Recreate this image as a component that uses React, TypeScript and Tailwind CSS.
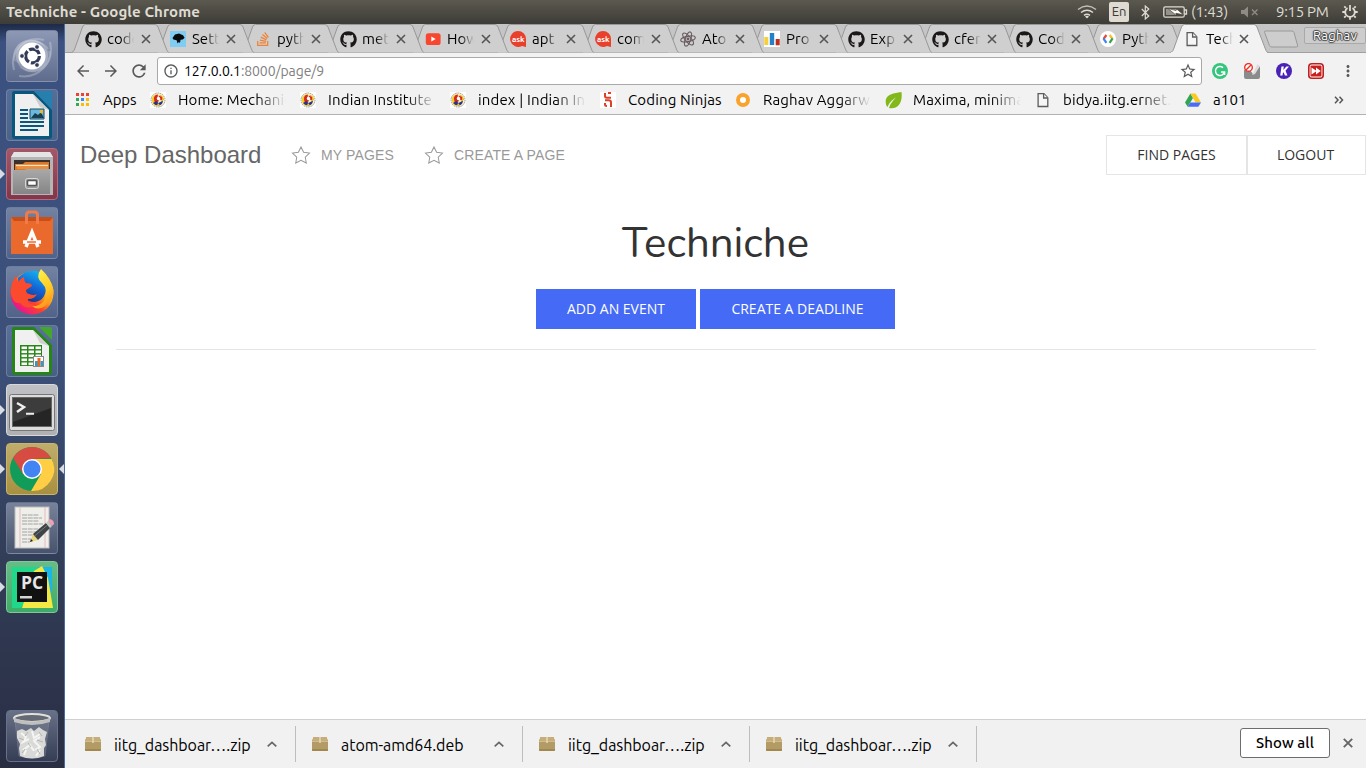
import React from 'react';
import { FaGithub, FaStackOverflow } from 'react-icons/fa';
import { MdArrowBack, MdArrowForward, MdRefresh, MdInfoOutline, MdStarBorder, MdMoreVert } from 'react-icons/md';

const ui = "font-['Ubuntu','Noto_Sans',sans-serif]";

/* ---------- favicons ---------- */

const Github = () => <FaGithub size={17} color="#1b1817" />;

const Settings = () => (
  <svg width="16" height="16" viewBox="0 0 16 16">
    <rect width="16" height="16" fill="#7fcdf3" />
    <path d="M2.5 7 5 3.6l4-1 4 1.6 1.6 2.6-1.8 1.6-2.2.4-.6 3-1.6-.6-.8 1.4-1-3.4-3.2-.6Z" fill="#0a0a0a" />
  </svg>
);

const StackOverflow = () => <FaStackOverflow size={16} color="#ef8236" />;

const Youtube = () => (
  <svg width="16" height="16" viewBox="0 0 16 16">
    <rect x=".8" y="2.2" width="14.8" height="11.8" rx="2.6" fill="#f8462f" />
    <path d="M6.3 5.4v5l4.4-2.5Z" fill="#fff" />
  </svg>
);

const Ask = () => (
  <svg width="17" height="17" viewBox="0 0 17 17">
    <path d="M8 0a8 8 0 1 0 4 15l4 1V8a8 8 0 0 0-8-8Z" fill="#e8402a" />
    <text x="8.2" y="10.8" textAnchor="middle" fontSize="8" fontWeight="700" fill="#fff" fontFamily="Ubuntu, Noto Sans">ask</text>
  </svg>
);

const Atom = () => (
  <svg width="16" height="16" viewBox="0 0 16 16" fill="none" stroke="#685b60" strokeWidth="1.1">
    <ellipse cx="8" cy="8" rx="7.4" ry="2.7" transform="rotate(-12 8 8)" />
    <ellipse cx="8" cy="8" rx="7.4" ry="2.7" transform="rotate(48 8 8)" />
    <ellipse cx="8" cy="8" rx="7.4" ry="2.7" transform="rotate(108 8 8)" />
    <circle cx="8" cy="8" r=".9" fill="#685b60" />
  </svg>
);

const Bars = () => (
  <svg width="16" height="16" viewBox="0 0 16 16">
    <rect width="16" height="16" fill="#fff" />
    <rect x=".3" y="6" width="4" height="8" fill="#f7cf3a" />
    <rect x="5.8" y="2" width="4.4" height="12" fill="#2480c8" />
    <rect x="11.7" y="8" width="4" height="6.3" fill="#bf2f1c" />
  </svg>
);

const Developers = () => (
  <svg width="16" height="16" viewBox="0 0 16 16" fill="none" strokeWidth="2.2">
    <circle cx="8" cy="8" r="8" fill="#fff" />
    <path d="M6.4 4 3.5 8" stroke="#e8453c" />
    <path d="m3.4 7.4 3 4.400" stroke="#4086f4" />
    <path d="m9.600 4 3 4" stroke="#f6c12b" />
    <path d="m12.600 7.400-3 4.400" stroke="#31a350" />
  </svg>
);

const Page = () => (
  <svg width="16" height="16" viewBox="0 0 16 16" fill="#f6f6f6" stroke="#5c5c5c" strokeWidth="1.3">
    <path d="M3.1 1.7h5.8l3.9 4v8.8H3.1Z" />
    <path d="M8.6 1.7V6h4.2" />
  </svg>
);

/* ---------- tab strip ---------- */

const tabs = [
  { icon: <Github />, title: 'code' },
  { icon: <Settings />, title: 'Sett' },
  { icon: <StackOverflow />, title: 'pyth' },
  { icon: <Github />, title: 'met' },
  { icon: <Youtube />, title: 'How' },
  { icon: <Ask />, title: 'apt' },
  { icon: <Ask />, title: 'com' },
  { icon: <Atom />, title: 'Ato' },
  { icon: <Bars />, title: 'Pro' },
  { icon: <Github />, title: 'Exp' },
  { icon: <Github />, title: 'cfer' },
  { icon: <Github />, title: 'Cod' },
  { icon: <Developers />, title: 'Pyth' },
  { icon: <Page />, title: 'Tech' },
];

function Tab({ icon, title, index }: { icon: React.ReactNode; title: string; index: number }) {
  const active = index === tabs.length - 1;
  return (
    <div
      className={`relative h-[29px] shrink-0 ${index < 7 ? 'w-[85px]' : 'w-[84px]'}`}
      style={{ zIndex: active ? 30 : 20 - index }}
    >
      <svg className="absolute left-0 top-0" width="98" height="29" viewBox="0 0 98 29">
        <path
          d="M.5 28.5C3 28 3.5 25 4 24L11.5 3Q12.3 .5 14.5 .5H84Q86 .5 87 3L95 24Q96 27 97.5 28.5"
          fill={active ? '#f2f2f2' : '#cfcfcf'}
          stroke="#989898"
        />
        {active && <path d="M1 28.5H97" stroke="#f2f2f2" />}
      </svg>
      <div className="relative flex h-full w-[86px] items-center pl-[14px] pt-px">
        <div className="flex w-[22px] shrink-0">{icon}</div>
        <div className="w-[27px] overflow-hidden whitespace-nowrap text-[15px] leading-5 text-black [mask-image:linear-gradient(to_right,black_50%,transparent)]">
          {title}
        </div>
        <svg className={index < 7 ? 'ml-[7px]' : 'ml-[6px]'} width="10" height="10" viewBox="0 0 10 10" stroke="#555" strokeWidth="1.6">
          <path d="m1 1 8 8M9 1 1 9" />
        </svg>
      </div>
    </div>
  );
}

function TabStrip() {
  return (
    <div className="relative flex h-[29px] border-b border-[#a0a0a0] bg-[#c5c5c5] pl-[6px]">
      {tabs.map((t, i) => (
        <Tab key={i} index={i} icon={t.icon} title={t.title} />
      ))}
      <svg className="ml-[9px] mt-[6px] shrink-0" width="36" height="18" viewBox="0 0 36 18">
        <path d="M2.5 1h26.5q1.5 0 2 1.5l3.5 12.5q.6 2-1 2H9q-2 0-2.5-1.5L1.6 2.5Q1 1 2.5 1Z" fill="#cdcdcd" stroke="#999" />
      </svg>
      <div className="absolute right-0 top-[3px] flex h-[17px] w-[62px] items-center justify-center rounded-[2px] border border-[#a9a9a9] bg-[#cdcdcd] text-[13px] tracking-[0.2px] text-white [text-shadow:0_0_1px_#333,1px_0_1px_#444,-1px_0_1px_#444,0_1px_1px_#444,0_-1px_1px_#444]">
        Raghav
      </div>
    </div>
  );
}

/* ---------- toolbar ---------- */

const Grammarly = () => (
  <svg width="16" height="16" viewBox="0 0 16 16" fill="none">
    <circle cx="8" cy="8" r="8" fill="#36c57c" />
    <path d="M11 4.7a4.5 4.5 0 1 0 1.4 4M9 9h3.6v3" stroke="#fff" strokeWidth="1.5" />
  </svg>
);
const Blocker = () => (
  <svg width="16" height="16" viewBox="0 0 16 16" fill="none">
    <path d="M0 7h6l3 4 7-8v11a2 2 0 0 1-2 2H2a2 2 0 0 1-2-2Z" fill="#8b8b8b" />
    <path d="m8 12 5.500-11L16 3l-5 8Z" fill="#ddd" />
    <circle cx="4.5" cy="4.4" r="3.8" fill="#fff" stroke="#ee3124" strokeWidth="1.4" />
    <path d="m2 7 5-5" stroke="#ee3124" strokeWidth="1.4" />
  </svg>
);
const KIcon = () => (
  <svg width="16" height="16" viewBox="0 0 16 16">
    <circle cx="8" cy="8" r="8" fill="#4a22b5" />
    <path d="M5.5 3.5h2.3L7.3 7l3-3.5H13L9.5 7.7l2 4.8H8.9L7.6 9.3l-.8.9-.3 2.3H4.2Z" fill="#fff" />
  </svg>
);
const Forward = () => (
  <svg width="16" height="16" viewBox="0 0 16 16">
    <rect x=".8" y=".8" width="14.4" height="14.4" rx="3" fill="#fff" stroke="#c01f1f" strokeWidth="1.6" />
    <rect x="2.5" y="2.5" width="11" height="11" rx="1" fill="#c8201f" />
    <path d="M3.500 4.500 8 7.500v-3L12.700 8 8 11.500v-3l-4.500 3Z" fill="#fff" />
  </svg>
);

function Toolbar() {
  return (
    <div className="flex h-[36px] items-center pl-[9px] text-[#5a5a5a]">
      <div className="flex w-[83px] items-center gap-[10px]">
        <MdArrowBack size={18} />
        <MdArrowForward size={18} />
        <MdRefresh size={20} className="-ml-px" />
      </div>
      <div className="flex h-7 w-[1045px] shrink-0 items-center rounded-[3px] border border-[#a9a9a9] bg-white pl-[5px] pr-1">
        <MdInfoOutline size={16} />
        <div className="ml-[5px] flex-1 text-[14px] leading-5 tracking-[-0.09px] text-[#808080]">
          <span className="text-black">127.0.0.1</span>:8000/page/9
        </div>
        <MdStarBorder size={18} />
      </div>
      <div className="ml-[10px] flex items-center gap-4">
        <Grammarly />
        <Blocker />
        <KIcon />
        <Forward />
        <MdMoreVert size={18} className="-ml-px" />
      </div>
    </div>
  );
}

/* ---------- bookmarks ---------- */

const Apps = () => (
  <svg width="14" height="14" viewBox="0 0 14 14">
    {['#ea4335', '#ea4335', '#ea4335', '#34a853', '#4285f4', '#fbbc05', '#34a853', '#fbbc05', '#fbbc05'].map((c, i) => (
      <rect key={i} x={(i % 3) * 5} y={Math.floor(i / 3) * 5} width="3" height="3" fill={c} />
    ))}
  </svg>
);
const Institute = () => (
  <svg width="16" height="16" viewBox="0 0 16 16">
    <rect width="16" height="16" fill="#fff" />
    <circle cx="8" cy="8" r="7" fill="#fbf3c4" stroke="#9a978c" strokeDasharray="1.5 .8" />
    <path d="M2 9a6 6 0 0 1 4-6.500L5.500 8 9 12.500 6 14Q3 13 2 9Z" fill="#f3cb25" />
    <path d="M4 7a4 4 0 0 1 4-4.500L7.500 6 9 9 6 11Q4 10 4 7Z" fill="#d8271c" />
    <path d="M9.500 2.500Q14 4 14 8l-3 1-1-3Z" fill="#f0b41f" />
    <path d="M8.500 3.500 12 5v3l-2.500-.5Z" fill="#d8271c" />
    <path d="M3 11 6.500 9l2 2L13 8.500Q12.500 13 9 13.500 5 13.500 3 11Z" fill="#27368c" />
    <circle cx="8.5" cy="6.5" r="1.7" fill="#fff" />
    <path d="M7 13.500 8 11l2 2.200Z" fill="#f3cb25" />
  </svg>
);
const Ninjas = () => (
  <svg width="16" height="16" viewBox="0 0 16 16" fill="none" stroke="#dd4126" strokeWidth="2">
    <rect width="16" height="16" fill="#fff" stroke="none" />
    <path d="M5 1v3q0 1.800 1.800 1.800H11M11 1H8M5 8.300h3.500Q11 8.300 11 10.500V15M5 11v1.500q0 1.500 2 1.500" />
  </svg>
);
const Ring = () => (
  <svg width="16" height="16" viewBox="0 0 16 16">
    <circle cx="8" cy="8" r="5" fill="#fff" stroke="#f9a32f" strokeWidth="4" />
    <path d="M8 5q3 3 0 5.5Q5 8 8 5" fill="#fff" />
  </svg>
);
const Leaf = () => (
  <svg width="17" height="17" viewBox="0 0 17 17">
    <path d="M16.5 0C12 1 1 1 .7 9.5c0 3 .8 4.5 1.8 5.5C4.5 10 8 7 11 5.5 8 8.5 5 12 4 16c8 1.500 14-4 12.500-16Z" fill="#83b81a" />
  </svg>
);
const Drive = () => (
  <svg width="16" height="16" viewBox="0 0 16 16">
    <path d="M5.4 1.5 0 10.5l2.7 4.3L8 6Z" fill="#32a553" />
    <path d="M5.4 1.5h5.2l5.4 9h-5.4Z" fill="#fdc91e" />
    <path d="M5.3 10.5H16l-2.7 4.3H2.7Z" fill="#4b6cf5" />
  </svg>
);

const bookmarks = [
  { icon: <Institute />, title: 'Home: Mechanic', w: 'w-[150px]' },
  { icon: <Institute />, title: 'Indian Institute o', w: 'w-[150px]' },
  { icon: <Institute />, title: 'index | Indian Ins', w: 'w-[150px]' },
  { icon: <Ninjas />, title: 'Coding Ninjas', w: 'w-[135px]', full: true },
  { icon: <Ring />, title: 'Raghav Aggarw', w: 'w-[150px]' },
  { icon: <Leaf />, title: 'Maxima, minima', w: 'w-[150px]' },
  { icon: <Page />, title: 'bidya.iitg.ernet.', w: 'w-[150px]' },
  { icon: <Drive />, title: 'a101', w: 'w-[60px]', full: true },
];

function Bookmarks() {
  return (
    <div className="flex h-[22px] items-center pl-[11px] text-[15px] leading-5 tracking-[0.15px] text-black">
      <div className="flex w-[74px] items-center gap-[13px]">
        <Apps />
        <span className="tracking-[-0.1px]">Apps</span>
      </div>
      {bookmarks.map((b) => (
        <div key={b.title} className={`flex shrink-0 items-center ${b.w}`}>
          <div className="w-7 shrink-0">{b.icon}</div>
          <div
            className={`overflow-hidden whitespace-nowrap ${
              b.full ? '' : 'w-[108px] [mask-image:linear-gradient(to_right,black_72%,transparent)]'
            }`}
          >
            {b.title}
          </div>
        </div>
      ))}
      <svg className="ml-[89px]" width="10" height="8" viewBox="0 0 10 8" fill="none" stroke="#555" strokeWidth="1.5">
        <path d="m1 .8 3 3.2-3 3.2M5.5.8l3 3.2-3 3.2" />
      </svg>
    </div>
  );
}

/* ---------- desktop top panel ---------- */

function Panel() {
  return (
    <div className="flex h-6 items-center bg-linear-to-b from-[#5b594f] to-[#3d3c37] pl-[6px] text-[#dfdbd2]">
      <div className="text-[15px] font-bold tracking-[0.1px]">Techniche - Google Chrome</div>
      <div className="ml-auto flex h-full items-center">
        <svg width="20" height="14" viewBox="0 0 20 14" fill="none" stroke="#dfdbd2" strokeWidth="1.5">
          <path d="M1 4.5Q10-2.5 19 4.5" opacity=".8" />
          <path d="M4 7.5q6-4.5 12 0M7 10.3q3-2.2 6 0" />
          <path d="m8 11.5 2 2 2-2q-2-1.4-4 0Z" fill="#dfdbd2" stroke="none" />
        </svg>
        <div className="ml-[12px] flex h-5 w-5 items-center justify-center rounded-[2px] bg-[#dfdbd2] text-[13px] text-[#3c3b37]">En</div>
        <svg className="ml-[12px]" width="9" height="15" viewBox="0 0 9 15" fill="none" stroke="#dfdbd2" strokeWidth="1.2">
          <path d="m.8 4 7 7-3.5 3V1l3.500 3-7 7" />
        </svg>
        <svg className="ml-[13px]" width="25" height="12" viewBox="0 0 25 12" fill="none" stroke="#dfdbd2" strokeWidth="1.3">
          <rect x=".8" y=".8" width="20.4" height="10.4" rx="1.5" />
          <path d="M21.5 4h2v4h-2" />
          <path d="M3 3h10v6H3Z" fill="#dfdbd2" stroke="none" opacity=".5" />
          <path d="M5 2.500 13 4.500l1-1.200 6.500 5.500-7.500-1.500-1 1Z" fill="#fffdf5" stroke="#4b4a43" strokeWidth=".7" />
        </svg>
        <div className="ml-[3px] w-[37px] whitespace-nowrap text-[15px] tracking-[-0.25px]">(1:43)</div>
        <svg className="ml-[13px] opacity-45" width="18" height="12" viewBox="0 0 18 12" fill="none" stroke="#dfdbd2" strokeWidth="1.4">
          <path d="M0 4h3l4-3.500v11L3 8H0Z" fill="#dfdbd2" stroke="none" />
          <path d="m11 3.500 5.500 5.500m0-5.500L11 9" />
        </svg>
        <div className="ml-[17px] w-[54px] whitespace-nowrap text-[15px] tracking-[-0.3px]">9:15 PM</div>
        <svg className="ml-[12px] mr-[8px]" width="16" height="16" viewBox="0 0 16 16" fill="none" stroke="#dfdbd2" strokeWidth="1.8">
          <path d="M5.500 4A4.800 4.800 0 1 0 10.500 4" />
          <path d="M8 1v6" />
          <path d="m3.800 3.800-1.500-1.500m9.900 1.500 1.500-1.500M3 8H.3M13 8h2.700m-12 4-1.500 1.700m10-1.700 1.500 1.700M8 13v2.700" />
        </svg>
      </div>
    </div>
  );
}

/* ---------- launcher ---------- */

const Dash = () => (
  <svg width="52" height="52" viewBox="0 0 52 52" fill="none">
    <path d="M8 40C3 20 20 5 38 10M13 46C32 49 49 33 44 12M8 27C9 10 29 4 42 19" stroke="#fff" opacity=".25" strokeWidth="2" />
    <path d="M7 30C6 12 26 2 40 16 28 8 12 16 14 34ZM45 22C46 40 26 50 12 36 24 44 40 36 38 18Z" fill="#fff" opacity=".15" />
    <circle cx="26" cy="26" r="16" fill="#fff" opacity=".25" />
    <circle cx="26" cy="26" r="13.5" fill="#fff" />
    <circle cx="26.500" cy="26" r="6.900" stroke="#323b57" strokeWidth="3.2" strokeDasharray="12.4 2" />
    <circle cx="16" cy="26" r="2.4" fill="#323b57" stroke="#fff" />
    <circle cx="31" cy="17" r="2.4" fill="#323b57" stroke="#fff" />
    <circle cx="31" cy="35" r="2.4" fill="#323b57" stroke="#fff" />
  </svg>
);

const Writer = () => (
  <svg width="52" height="52" viewBox="0 0 52 52">
    <path d="M8 2h20l18 18v27q0 3-3 3H9q-3 0-3-3V5q0-3 2-3Z" fill="#07577f" />
    <path d="M28 2h16q2 0 2 2v17Z" fill="#267fad" />
    <path d="M9 5h18l16 16v26H9Z" fill="#efefef" />
    <path d="m27 5 16 16-9-3Z" fill="#ccc" />
    <path d="M14 21h8m-8 4h8m-8 4h8m-8 4h24m-24 4h24m-24 4h18" stroke="#07577f" strokeWidth="2" />
    <path d="M24 20h14v10H24Z" fill="#69b8dd" />
    <path d="m25 29 4-5 3 2 3-3 3 6Z" fill="#193f4f" />
    <circle cx="35.5" cy="22.5" r="2" fill="#e5b73b" />
    <path d="M24 20h14v10H24Z" fill="none" stroke="#164f6b" />
  </svg>
);

const Files = () => (
  <svg width="52" height="52" viewBox="0 0 52 52">
    <defs>
      <linearGradient id="drawer" x1="0" y1="0" x2="0" y2="1">
        <stop offset="0" stopColor="#a9a9a9" />
        <stop offset="1" stopColor="#858585" />
      </linearGradient>
    </defs>
    <path d="M8 4h36l3 5v38H5V9Z" fill="#b5b5b5" />
    <path d="M8 4h36l3 5H5Z" fill="#e4e4e4" />
    <path d="M8 12h36v10H8Z" fill="#3a302c" />
    <path d="M9 16h8l2-2h24v8H9Z" fill="#dd7628" />
    <path d="M10 17.500h32" stroke="#ffe3b7" strokeWidth="1.5" />
    <path d="M11 20h31" stroke="#f6a650" />
    <path d="M7 22h11l3-1h23v25H7Z" fill="url(#drawer)" />
    <rect x="19.5" y="30.5" width="13" height="10" rx="2" fill="#999" stroke="#d7d7d7" />
    <rect x="21.5" y="32.5" width="9" height="5" rx="1" fill="#fff" stroke="#555" strokeWidth="1.5" />
  </svg>
);

const Software = () => (
  <svg width="52" height="52" viewBox="0 0 52 52" fill="none">
    <path d="M5 10h42v37H5Z" fill="#e96a2c" />
    <path d="m5 10 3 4h36l3-4Z" fill="#c94f19" />
    <path d="M20.500 17V8q0-3 3-3h5q3 0 3 3v9" stroke="#ef7b4d" strokeWidth="3" />
    <path d="m20 40 6-15 6 15M17 35h18" stroke="#fff" strokeWidth="3.4" />
    <path d="M21 35h9" stroke="#ee6b30" strokeWidth="1.5" />
  </svg>
);

const Firefox = () => (
  <svg width="52" height="52" viewBox="0 0 52 52">
    <defs>
      <linearGradient id="fox" x1=".9" y1=".1" x2=".15" y2=".85">
        <stop offset="0" stopColor="#ffee35" />
        <stop offset=".4" stopColor="#ffa41a" />
        <stop offset=".65" stopColor="#fc412c" />
        <stop offset="1" stopColor="#eb158b" />
      </linearGradient>
      <linearGradient id="globe" x1=".7" y1="0" x2=".3" y2="1">
        <stop offset="0" stopColor="#16b2ee" />
        <stop offset=".5" stopColor="#1265d6" />
        <stop offset="1" stopColor="#17307e" />
      </linearGradient>
      <linearGradient id="flame" x1=".3" y1="0" x2=".7" y2="1">
        <stop offset="0" stopColor="#fff44c" />
        <stop offset=".6" stopColor="#ffc824" />
        <stop offset="1" stopColor="#ff8a1c" />
      </linearGradient>
    </defs>
    <circle cx="26" cy="27" r="21.5" fill="url(#fox)" />
    <path d="M12 12Q20 3 31 5q8 3 9 13 1 16-11 18Q14 36 12 12Z" fill="url(#globe)" />
    <path d="M4.500 27Q5 16 10 10q0 4 2 6 3-4 6-5 0 4 2 6 6 0 6 3l-6 4q0 3 3 4 5 2 8 0-2 5-9 5-2 5 7 6-8 6-15-2Q7 38 4.500 27Z" fill="#fb4b2e" />
    <path d="M35 3Q29 11 36 17q7 7 2 18-5 6-12 5 6 5 13 0 9-6 8.500-16Q45 12 35 3Z" fill="url(#flame)" />
  </svg>
);

const Calc = () => (
  <svg width="52" height="52" viewBox="0 0 52 52">
    <path d="M8 2h20l18 18v27q0 3-3 3H9q-3 0-3-3V5q0-3 2-3Z" fill="#268516" />
    <path d="M33 2h11q2 0 2 2v11Z" fill="#45a62b" />
    <path d="M9 5h18l16 16v26H9Z" fill="#f0f0f0" />
    <path d="m27 5 16 16-9-3Z" fill="#cfcfcf" />
    <rect x="14" y="20" width="22" height="21" fill="#268516" />
    {[0, 1, 2, 3, 4].map((r) =>
      [0, 1, 2].map((c) => (
        <rect key={`${r}${c}`} x={15.5 + c * 7} y={21.5 + r * 4} width="5.5" height="2.6" fill="#fff" />
      )),
    )}
    <rect x="27.5" y="31.5" width="10" height="10" fill="#fff" stroke="#888" />
    <path d="M29 36h3v5h-3Z" fill="#3498cd" />
    <path d="M31.5 33h3v8h-3Z" fill="#ee681c" />
    <path d="M34.5 36h2.5v5h-2.5Z" fill="#3498cd" />
  </svg>
);

const Terminal = () => (
  <svg width="52" height="52" viewBox="0 0 52 52">
    <rect x="3.500" y="10.500" width="45" height="36" rx="2" fill="#dcdcdc" stroke="#777" />
    <rect x="6.500" y="13.500" width="39" height="29" fill="#252525" stroke="#666" />
    <path d="M7 14h38v10L7 38Z" fill="#3c3c3c" />
    <path d="m11 19 7 4-7 5" fill="none" stroke="#eee" strokeWidth="2.5" />
    <path d="M20 29.700h8" stroke="#eee" strokeWidth="2" />
  </svg>
);

const Chrome = () => (
  <svg width="52" height="52" viewBox="0 0 52 52">
    <circle cx="26" cy="26" r="22" fill="#129c5a" />
    <path d="M7 15A22 22 0 0 1 45 15L26 16 17 31Z" fill="#d64b42" />
    <path d="M26 16h19.700A22 22 0 0 1 25 48l10-17Z" fill="#ffce45" />
    <circle cx="26" cy="26" r="10" fill="#fff" />
    <circle cx="26" cy="26" r="8.500" fill="#4284f3" />
  </svg>
);

const Editor = () => (
  <svg width="52" height="52" viewBox="0 0 52 52">
    <rect x="9" y="5" width="34" height="41" fill="#eeeeeb" stroke="#bcbcba" />
    <path d="M14 5v41M39 5v41" stroke="#e9baba" />
    <path d="M16 13h17M16 16h20M16 19h17M16 22h21M16 27h20M16 30h15M16 33h20M16 37h12M16 40h8" stroke="#999" strokeWidth=".9" strokeDasharray="5 .7" />
    <path d="m24 40 3-8 5 6Z" fill="#ead579" />
    <path d="m27 32 13-11 4 5-12 12Z" fill="#3f4446" />
    <path d="m28.500 34 13-11" stroke="#74797a" />
    <path d="m40 21 2-2 4 5-2 2Z" fill="#c3c9c5" />
    <path d="m42 19 2-2q4 1 4 5l-2 2Z" fill="#efa0b5" />
    <path d="m24 40 1-3 2 2Z" fill="#222" />
  </svg>
);

const PyCharm = () => (
  <svg width="52" height="52" viewBox="0 0 52 52">
    <path d="M6 6h26l8 14-25 27H6Z" fill="#21d789" />
    <path d="M32 6h14v26Z" fill="#18b7e8" />
    <path d="m28 10 8-5 6 12 5 30H16Z" fill="#f4e844" />
    <rect x="11" y="11" width="30" height="30" fill="#111" />
    <text x="26" y="27.500" textAnchor="middle" fontFamily="Open Sans, Noto Sans" fontSize="17.500" fontWeight="700" fill="#e7e7e7">PC</text>
    <rect x="14" y="35" width="12" height="2.500" fill="#d5d5d5" />
  </svg>
);

const Trash = () => (
  <svg width="52" height="52" viewBox="0 0 52 52">
    <path d="m9 10 4 36q13 4 26 0l4-36Z" fill="#9298a6" opacity=".3" stroke="#b7b9be" />
    <path d="m11 21 5-2 4 2 5-3 3 3 5-4 4 3 4 2-2 7 1 6-2 3v8q-12 5-24 0l-1-8 1-4-3-6Z" fill="#d9dad8" />
    <path d="m15 23 5 4-3 5 6-3m3-8 2 7 6-4m-17 16 7-5 4 6m6-14-6 4 6 6-5 3M18 45l2-5m10 6 4-6" fill="none" stroke="#f5f5f3" strokeWidth="2" />
    <path d="m13 28 5 2m4 3 3 4m6-7 6 2m-18 7-3 4m15-4 3 5M22 22l-3 4m14-4 3 4" stroke="#b4b5b2" />
    <ellipse cx="26" cy="8" rx="18" ry="4" fill="#656973" stroke="#e0e0dc" strokeWidth="2" />
    <path d="M8 8v4q18 6 36 0V8Q26 15 8 8Z" fill="#bfc0bd" />
  </svg>
);

const glass = 'border-[#8490a8]/60 bg-linear-to-b from-[#7182a3] to-[#51638a]';
const apps = [
  { icon: <Dash />, look: 'border-[#8490a8]/60 bg-linear-to-b from-[#8c98b4] to-[#5f6c8d]' },
  { icon: <Writer />, look: 'border-[#8490a8]/60 bg-linear-to-b from-[#536e98] to-[#4b638a]' },
  { icon: <Files />, look: 'border-[#b46a78] bg-linear-to-b from-[#a1586a] to-[#83354a]', arrow: true },
  { icon: <Software />, look: glass },
  { icon: <Firefox />, look: glass },
  { icon: <Calc />, look: 'border-[#8490a8]/60 bg-linear-to-b from-[#59709a] to-[#485f85]' },
  { icon: <Terminal />, look: 'border-[#d8d8d8] bg-linear-to-b from-[#bfc1c5] to-[#aeb0b4]', arrow: true },
  { icon: <Chrome />, look: 'border-[#c7b66d] bg-linear-to-b from-[#c0ad6b] to-[#a99040]', arrow: true, current: true },
  { icon: <Editor />, look: 'border-[#8490a8]/50 bg-linear-to-b from-[#78839b] to-[#48546d]' },
  { icon: <PyCharm />, look: 'border-[#82c79b] bg-linear-to-b from-[#66bd86] to-[#3eab69]', arrow: true },
];

function Launcher() {
  return (
    <div className="flex w-[65px] shrink-0 flex-col border-r border-[#4b6b9c] bg-[linear-gradient(to_bottom,#1d2a48_0,#3b5180_18px,#3c5079_45%,#333e59_70%,#292e43_100%)] pb-[6px] pl-[6px] pt-[6px]">
      <div className="flex flex-col gap-[7px]">
        {apps.map((a, i) => (
          <div key={i} className="relative h-[52px] w-[52px]">
            <div className={`flex h-full w-full items-center justify-center overflow-hidden rounded-[4px] border ${a.look}`}>
              <div className="shrink-0">{a.icon}</div>
            </div>
            {a.arrow && (
              <svg className="absolute -left-[6px] top-[21px]" width="5" height="10" viewBox="0 0 5 10">
                <path d="m0 0 5 5-5 5Z" fill="#d9dce2" />
              </svg>
            )}
            {a.current && (
              <svg className="absolute -right-[6px] top-[21px]" width="5" height="10" viewBox="0 0 5 10">
                <path d="m5 0-5 5 5 5Z" fill="#d9dce2" />
              </svg>
            )}
          </div>
        ))}
      </div>
      <div className="mt-auto flex h-[52px] w-[52px] items-center justify-center rounded-[4px] border border-[#69718a] bg-linear-to-b from-[#697188] to-[#353d55]">
        <div className="shrink-0">
          <Trash />
        </div>
      </div>
    </div>
  );
}

/* ---------- page ---------- */

const Star = () => (
  <svg width="20" height="20" viewBox="0 0 20 20">
    <path
      d="m10 2 2.63 5.27 5.87.85-4.25 4.1 1 5.78L10 15.27 4.75 18l1-5.78L1.5 8.12l5.87-.85Z"
      fill="none"
      stroke="#999"
      strokeWidth="1.01"
    />
  </svg>
);

function Dashboard() {
  return (
    <div className="min-h-0 flex-1 bg-white">
      <nav className="flex h-20 items-center pl-[15px] font-['Liberation_Sans',Arial,sans-serif]">
        <div className="w-[181px] whitespace-nowrap text-2xl text-[#666]">Deep Dashboard</div>
        <a className="ml-[30px] flex w-[103px] items-center gap-[10px] whitespace-nowrap text-sm tracking-[0.14px] text-[#999]">
          <Star />
          MY PAGES
        </a>
        <a className="ml-[30px] flex items-center gap-[10px] whitespace-nowrap text-sm tracking-[0.14px] text-[#999]">
          <Star />
          CREATE A PAGE
        </a>
        <div className="ml-auto flex font-['Open_Sans',sans-serif] text-sm text-[#333]">
          <button className="h-10 w-[141px] border border-[#e5e5e5]">FIND PAGES</button>
          <button className="-ml-px h-10 w-[120px] border border-l-2 border-[#e5e5e5] pr-[2px]">LOGOUT</button>
        </div>
      </nav>
      <main className="mx-auto w-[1200px] text-center">
        <h1 className="pt-6 font-['Nunito','Lato',sans-serif] text-[42px] leading-[50px] text-[#333]">Techniche</h1>
        <div className="mt-5 flex justify-center gap-1 font-['Open_Sans',sans-serif] text-sm text-white">
          <button className="h-10 w-[160px] bg-[#446af6]">ADD AN EVENT</button>
          <button className="h-10 w-[195px] bg-[#446af6]">CREATE A DEADLINE</button>
        </div>
        <hr className="mt-5 border-[#e5e5e5]" />
      </main>
    </div>
  );
}

/* ---------- downloads ---------- */

const Box = () => (
  <svg width="18" height="16" viewBox="0 0 18 16">
    <path d="M2.5 1h13L17 5v9q0 1-1 1H2q-1 0-1-1V5Z" fill="#b39b65" />
    <path d="M2.5 1h13L17 5.5H1Z" fill="#c6ae7c" />
    <path d="M1 5.5h16" stroke="#d2bd8d" />
    <path d="M8.200 1h1.600v6H8.200Z" fill="#e4d6b3" />
    <path d="M1 13h16v1q0 1-1 1H2q-1 0-1-1Z" fill="#a1884f" />
  </svg>
);

function Downloads() {
  return (
    <div className="flex h-[49px] shrink-0 items-center border-t border-[#cfcfcf] bg-[#f1f1f1] text-black">
      {['iitg_dashboar….zip', 'atom-amd64.deb', 'iitg_dashboar….zip', 'iitg_dashboar….zip'].map((name, i) => (
        <div
          key={i}
          className={`flex h-9 items-center border-r border-[#bdbdbd] pr-[18px] ${i === 0 ? 'w-[231px] pl-[19px]' : 'w-[227px] pl-[15px]'}`}
        >
          <div className="w-[30px] shrink-0 pb-px">
            <Box />
          </div>
          <div className="flex-1 whitespace-nowrap pt-[2px] text-[16px] tracking-[-0.05px]">{name}</div>
          <svg width="10" height="6" viewBox="0 0 10 6" fill="none" stroke="#666" strokeWidth="1.7">
            <path d="m.7 5.3 4.300-4 4.300 4" />
          </svg>
        </div>
      ))}
      <button className="-mt-[2px] ml-auto h-[30px] w-[90px] rounded-[3px] border border-[#6d6d6d] bg-white text-[15px] font-medium tracking-[0.1px]">
        Show all
      </button>
      <svg className="-mt-[2px] ml-[13px] mr-[13px]" width="10" height="10" viewBox="0 0 10 10" stroke="#666" strokeWidth="1.9">
        <path d="m.8.8 8.400 8.400m0-8.400L.8 9.200" />
      </svg>
    </div>
  );
}

export default function App() {
  return (
    <div className={`flex h-[768px] w-[1366px] flex-col overflow-hidden ${ui}`}>
      <Panel />
      <div className="flex min-h-0 flex-1">
        <Launcher />
        <div className="flex min-w-0 flex-1 flex-col">
          <TabStrip />
          <div className="h-[62px] shrink-0 border-b border-[#b2b2b2] bg-[#f2f2f2]">
            <Toolbar />
            <Bookmarks />
          </div>
          <Dashboard />
          <Downloads />
        </div>
      </div>
    </div>
  );
}
